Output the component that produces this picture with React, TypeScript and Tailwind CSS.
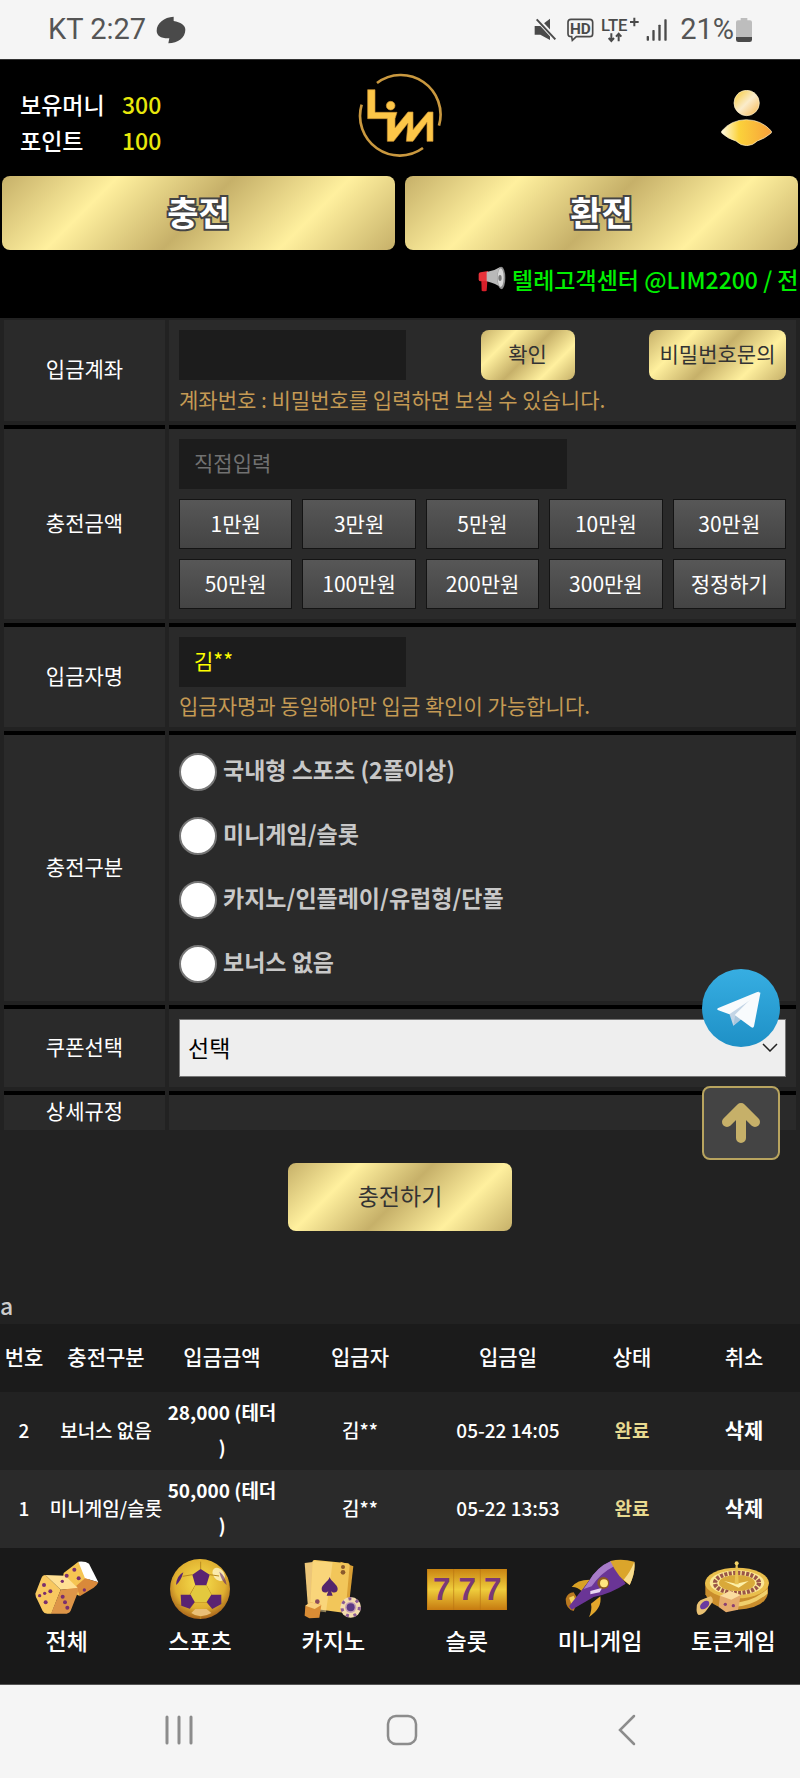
import React from 'react'

const GOLD = 'bg-[linear-gradient(135deg,#c6b069_0%,#fff09e_25%,#c6b069_50%,#fff09e_75%,#c6b069_100%)]'

const amounts = ['1만원', '3만원', '5만원', '10만원', '30만원', '50만원', '100만원', '200만원', '300만원', '정정하기']
const types = ['국내형 스포츠 (2폴이상)', '미니게임/슬롯', '카지노/인플레이/유럽형/단폴', '보너스 없음']
const history = [
  { no: 2, type: '보너스 없음', amount: '28,000 (테더', name: '김**', date: '05-22 14:05' },
  { no: 1, type: '미니게임/슬롯', amount: '50,000 (테더', name: '김**', date: '05-22 13:53' },
]

const StatusBar = () => (
  <div className="flex h-15 items-center justify-between border-b border-[#333] bg-[#f5f5f5] px-12 font-[Roboto,sans-serif] text-[29px] text-[#555]">
    <div className="flex items-center gap-[10px]">
      <span>KT 2:27</span>
      <svg width="30" height="28" viewBox="0 0 90 84" fill="#4a4a4a">
        <path d="M53 2v13c20 4 35 12 35 26 0 24-22 40-51 41l3-15C14 68 2 58 2 44 2 22 24 3 53 2z" />
      </svg>
    </div>
    <div className="flex items-center">
      <svg width="138" height="40" viewBox="0 -24 414 120" className="mr-2 overflow-visible">
        <g fill="#4a4a4a">
          <path d="M2 24h17l29-22v64L19 50H2z" />
          <path d="M8 2l58 62" stroke="#f5f5f5" strokeWidth="14" />
          <path d="M8 4l56 60" stroke="#4a4a4a" strokeWidth="6" />
          <path d="M111 4h56q9 0 9 9v34q0 9-9 9h-40l-12 11-2-11q-11 0-11-9V13q0-9 9-9z" fill="none" stroke="#4a4a4a" strokeWidth="5" />
          <text x="139" y="47" textAnchor="middle" fontFamily="Roboto" fontSize="46" fontWeight="700">HD</text>
          <text x="201" y="38" fontFamily="Roboto" fontSize="50" fontWeight="500">LTE</text>
          <path d="M288 12h26M301 -1v26" stroke="#4a4a4a" strokeWidth="6" />
          <path d="M232 46v22m-8-8l8 9 8-9M254 70V48m-8 8l8-9 8 9" fill="none" stroke="#4a4a4a" strokeWidth="6" />
          <rect x="338" y="54" width="7" height="14" rx="2" />
          <rect x="355" y="36" width="7" height="32" rx="2" />
          <rect x="373" y="20" width="7" height="48" rx="2" />
          <rect x="391" y="4" width="7" height="64" rx="2" />
        </g>
      </svg>
      <span>21%</span>
      <svg width="16" height="24" viewBox="0 0 48 72" className="ml-0.5">
        <path d="M14 0h20v7h8q6 0 6 6v46H0V13q0-6 6-6h8z" fill="#bdbdbd" />
        <path d="M0 57h48v8q0 7-7 7H7q-7 0-7-7z" fill="#4a4a4a" />
      </svg>
    </div>
  </div>
)

const Logo = () => (
  <svg width="84" height="84" viewBox="25 20 252 252" fill="none" aria-label="LIM">
    <path d="M82 50A119 119 0 0 1 268 178M220 245A119 119 0 0 1 36 115" stroke="#c9983f" strokeWidth="8" />
    <g fill="#fdc648" stroke="#c98f34" strokeWidth="2">
      <path d="M54 70h22v68h66l-6 19v28l39-48h15v53l45-53h15v88h-18v-57l-42 57h-20l5-55-43 55h-19v-68H54z" />
      <circle cx="123" cy="118" r="13" />
    </g>
  </svg>
)

const UserIcon = () => (
  <svg width="51" height="56" viewBox="0 0 153 168">
    <defs>
      <linearGradient id="head" x1="0" y1="0" x2="1" y2="1">
        <stop offset="0" stopColor="#f6c933" />
        <stop offset=".5" stopColor="#fbeccb" />
        <stop offset="1" stopColor="#f5b64c" />
      </linearGradient>
      <linearGradient id="body" x1="0" y1="0" x2="1" y2="0">
        <stop offset="0" stopColor="#fffae0" />
        <stop offset=".35" stopColor="#fbd23b" />
        <stop offset="1" stopColor="#f7a13a" />
      </linearGradient>
    </defs>
    <circle cx="77" cy="39" r="38" fill="url(#head)" stroke="#fff3d0" strokeWidth="2" />
    <path d="M2 123Q30 90 76 89q46 1 75 34v6q-22 18-42 24-14 14-32 14t-32-14Q22 147 2 129z" fill="url(#body)" stroke="#fff3d0" strokeWidth="2" />
  </svg>
)

const Megaphone = () => (
  <svg width="28" height="26" viewBox="0 0 84 78">
    <path d="M10 44h18l-2 30q-8 3-15 0z" fill="#d81f2a" />
    <path d="M2 24q0-4 6-5l22-4v30L8 46q-5 0-6-5z" fill="#e8323a" />
    <path d="M26 18Q50 14 68 2l6 66Q52 52 26 46z" fill="#b9b9b9" />
    <ellipse cx="70" cy="36" rx="12" ry="34" fill="#8e8e8e" />
    <ellipse cx="68" cy="35" rx="9" ry="28" fill="#d9d9d9" />
    <ellipse cx="66" cy="36" rx="5" ry="9" fill="#777" />
  </svg>
)

const DiceIcon = () => (
  <svg width="64" height="60" viewBox="0 0 192 180">
    <path d="M86 42l44-34 32 50-12 38-18 14-52-30z" fill="#f6c552" />
    <path d="M130 8q22-2 32 6l28 56-40-12z" fill="#fff" />
    <path d="M150 58l40 12q-4 10-14 16l-42 26-10-32z" fill="#d9893a" />
    <path d="M31 48l60 2 38 38-52 4z" fill="#ffe093" />
    <path d="M31 48q-8 0-12 10L1 104q0 8 6 18l16 34q4 8 14 8h12l28-72z" fill="#f8c860" />
    <path d="M77 92l52-6q2 8-2 18l-18 46q-3 12-14 14H48z" fill="#dd9548" />
    <g fill="#7a2f6e">
      <circle cx="118" cy="32" r="6" /><circle cx="95" cy="50" r="6" /><circle cx="131" cy="58" r="6" /><circle cx="148" cy="93" r="5" />
      <circle cx="27" cy="78" r="6" /><circle cx="14" cy="110" r="5" /><circle cx="29" cy="103" r="5" /><circle cx="46" cy="97" r="6" /><circle cx="32" cy="130" r="6" />
      <circle cx="83" cy="113" r="6" /><circle cx="90" cy="130" r="6" /><circle cx="97" cy="146" r="6" /><circle cx="82" cy="67" r="5" />
    </g>
  </svg>
)

const BallIcon = () => (
  <svg width="60" height="60" viewBox="0 0 180 180">
    <defs>
      <radialGradient id="ball" cx=".5" cy=".4" r=".6">
        <stop offset="0" stopColor="#f7e04e" />
        <stop offset=".7" stopColor="#e0b030" />
        <stop offset="1" stopColor="#a8641c" />
      </radialGradient>
    </defs>
    <circle cx="90" cy="90" r="90" fill="url(#ball)" />
    <ellipse cx="146" cy="46" rx="16" ry="22" fill="#fff6c8" opacity=".8" transform="rotate(-40 146 46)" />
    <path d="M76 79L60 107M109 79l15 28M74 129l-15 20M110 129l17 20M74 129h36M67 47L38 52M119 47l28 4M92 30V8M34 140l-14-4M154 135l10 0M92 180v-8" stroke="#b98a1e" strokeWidth="3" />
    <path d="M76 79h33l15 28-14 22H74l-12-22z" fill="#e3c93e" />
    <path d="M76 150h34l14 12q-34 20-60 0z" fill="#e9bf77" />
    <g fill="#5a2372">
      <path d="M92 30l27 17-10 32H76L67 47z" />
      <path d="M32 107h30l12 22-15 20-25-9z" />
      <path d="M124 107h30v28l-27 15-17-21z" />
      <path d="M40 40Q20 50 18 78q14-10 22-38z" />
      <path d="M148 38q18 12 22 40-16-12-22-40z" opacity=".6" />
    </g>
  </svg>
)

const CardIcon = () => (
  <svg width="58" height="60" viewBox="0 0 174 180">
    <path d="M2 12l30-4 6 146-26-6z" fill="#ecc679" />
    <path d="M110 8l38 14-16 140-40-20z" fill="#d99f34" />
    <path d="M26 6q2-4 8-3l98 10q6 1 5 7l-13 142-106-14z" fill="#f2c65a" />
    <path d="M26 6l60 4-20 150-48-6z" fill="#ffe39a" opacity=".5" />
    <path d="M77 54c4 14 24 22 24 36 0 12-14 14-20 6l5 14H68l5-14c-6 8-20 6-20-6 0-14 20-22 24-36z" fill="#54256c" />
    <circle cx="117" cy="24" r="6" fill="#8a5a2c" /><circle cx="117" cy="40" r="7" fill="#8a5a2c" />
    <circle cx="40" cy="128" r="7" fill="#8a4a5c" />
    <path d="M4 140l16-10 32 8-6 38-30 2-14-8z" fill="#d98c35" />
    <path d="M4 140l16-10 32 8-20 12z" fill="#f9cf7c" />
    <circle cx="140" cy="145" r="31" fill="#f3dcae" />
    <circle cx="140" cy="145" r="26" fill="none" stroke="#8a5a94" strokeWidth="9" strokeDasharray="9 14" />
    <circle cx="140" cy="145" r="17" fill="#c6a0b4" />
    <circle cx="140" cy="145" r="12" fill="#5c3a84" />
  </svg>
)

const SlotIcon = () => (
  <svg width="80" height="41" viewBox="0 0 240 123">
    <defs>
      <linearGradient id="slot" x1="0" y1="0" x2="0" y2="1">
        <stop offset="0" stopColor="#c98412" />
        <stop offset=".5" stopColor="#efcd3c" />
        <stop offset="1" stopColor="#c67a10" />
      </linearGradient>
    </defs>
    <rect width="240" height="123" fill="url(#slot)" />
    <path d="M80 0v123M160 0v123M1 0v123M239 0v123" stroke="#b87414" strokeWidth="3" opacity=".6" />
    <g fill="#7a3878" fontFamily="Liberation Sans" fontWeight="700" fontSize="94" textAnchor="middle">
      <text x="44" y="94">7</text>
      <text x="121" y="94">7</text>
      <text x="197" y="94">7</text>
    </g>
  </svg>
)

const RocketIcon = () => (
  <svg width="70" height="60" viewBox="0 0 210 180">
    <path d="M20 84q16-22 54-22L50 96Q34 82 20 84z" fill="#d9a125" />
    <path d="M78 134l28-22q6 36-34 62 10-22 6-40z" fill="#e2a72c" />
    <path d="M2 120q6-20 24-20l14 22-14 34Q2 150 2 120z" fill="#b9781f" />
    <path d="M12 116l14-6 8 20-10 18z" fill="#f4d25c" />
    <path d="M138 6Q96 24 72 66L12 142l8 10 66-38q52-10 96-40z" fill="#6a3596" />
    <path d="M138 6Q96 24 72 66l-16 24 24-8q26-40 70-62z" fill="#a77bc8" />
    <path d="M76 96l36-10-8 14-28 6z" fill="#e9d7f2" />
    <path d="M136 6q34-8 72 2 4 32-14 70-34-20-58-72z" fill="#dba52b" />
    <path d="M208 8q4 32-14 70l-18-16q22-26 32-54z" fill="#f7dc8e" />
    <circle cx="115" cy="72" r="18" fill="#8d5a20" />
    <circle cx="117" cy="73" r="12" fill="#ffe680" />
  </svg>
)

const RouletteIcon = () => (
  <svg width="74" height="56" viewBox="0 0 222 168">
    <path d="M28 66v34q20 46 96 46 84-4 92-50V66z" fill="#c98d2c" />
    <path d="M90 138q70 6 124-40v-14q-50 46-124 42z" fill="#f0cf6c" />
    <ellipse cx="123" cy="66" rx="96" ry="46" fill="#e9be4c" />
    <ellipse cx="123" cy="65" rx="82" ry="37" fill="#fbe897" />
    <ellipse cx="123" cy="66" rx="66" ry="30" fill="none" stroke="#9a5548" strokeWidth="13" strokeDasharray="9 4" />
    <ellipse cx="123" cy="66" rx="54" ry="24" fill="#d9a93a" />
    <path d="M84 60l36 8 38-8-30 20z" fill="#fdf0a8" />
    <path d="M119 8h6l3 62h-12z" fill="#e8c252" />
    <circle cx="122" cy="7" r="6" fill="#f2d46a" />
    <path d="M72 104l30-14 32 12-8 44-36 8-22-16z" fill="#e5ab6c" />
    <path d="M72 104l30-14 32 12-28 14z" fill="#fbdca0" />
    <circle cx="88" cy="130" r="5" fill="#8a3f72" /><circle cx="112" cy="134" r="5" fill="#8a3f72" />
    <path d="M2 140q0-20 20-26l22-8q8 6 6 16L30 150q-10 12-22 12-8-6-6-22z" fill="#e9c173" />
    <ellipse cx="26" cy="132" rx="16" ry="10" fill="#6a3aa0" transform="rotate(-40 26 132)" />
  </svg>
)

const menus = [
  { name: '전체', icon: <DiceIcon /> },
  { name: '스포츠', icon: <BallIcon /> },
  { name: '카지노', icon: <CardIcon /> },
  { name: '슬롯', icon: <SlotIcon /> },
  { name: '미니게임', icon: <RocketIcon /> },
  { name: '토큰게임', icon: <RouletteIcon /> },
]

const Row = ({ label, htmlFor, first, className, children }: { label: string; htmlFor?: string; first?: boolean; className?: string; children?: React.ReactNode }) => {
  const line = first ? '' : 'border-t-4 border-black'
  return (
    <div className="grid grid-cols-[161px_1fr] gap-1">
      <div className={`flex items-center justify-center bg-[#2a2a2a] pb-1 text-white ${line}`}>
        {htmlFor ? <label htmlFor={htmlFor}>{label}</label> : <span>{label}</span>}
      </div>
      <div className={`bg-[#2a2a2a] px-[10px] ${line} ${className ?? 'py-[10px]'}`}>{children}</div>
    </div>
  )
}

const App = () => {
  return (
    <main className="min-h-screen bg-[#222] font-['Noto_Sans_CJK_KR',sans-serif] text-[21px] leading-[31px]">
      <StatusBar />

      <header className="bg-black">
        <div className="grid h-29 grid-cols-3 items-center px-5">
          <dl className="grid grid-cols-[102px_1fr] pt-2 text-[23px] leading-9 font-medium">
            <dt className="text-white">보유머니</dt>
            <dd className="text-[#e8e80c]">300</dd>
            <dt className="text-white">포인트</dt>
            <dd className="text-[#e8e80c]">100</dd>
          </dl>
          <a href="#" className="justify-self-center pb-1.5"><Logo /></a>
          <a href="#" className="justify-self-end pr-2" aria-label="내 정보"><UserIcon /></a>
        </div>
        <div className="grid grid-cols-2 gap-[10px] px-0.5">
          {['충전', '환전'].map((t) => (
            <button key={t} type="button" className={`h-[74px] rounded-lg pb-1 text-[34px] font-bold text-white [paint-order:stroke_fill] [-webkit-text-stroke:4px_#444] ${GOLD}`}>
              {t}
            </button>
          ))}
        </div>
        <div className="flex h-[68px] items-center gap-1.5 overflow-hidden pb-[10px] pl-[478px] text-[23px] font-medium whitespace-nowrap text-[#00f000]">
          <span className="shrink-0"><Megaphone /></span>
          <span>텔레고객센터 @LIM2200 / 전</span>
        </div>
      </header>

      <form className="pb-[93px]" onSubmit={(e) => e.preventDefault()}>
        <div className="relative flex flex-col gap-1 px-1 pt-0.5">
          <Row label="입금계좌" htmlFor="account" first>
            <div className="flex items-center justify-between">
              <input id="account" type="password" className="h-[50px] w-[227px] bg-[#1c1c1c] px-[15px] text-white outline-none" />
              <button type="button" className={`h-[50px] w-[94px] rounded-lg pb-1 text-[#333] ${GOLD}`}>확인</button>
              <button type="button" className={`h-[50px] w-[137px] rounded-lg pb-1 text-[#333] ${GOLD}`}>비밀번호문의</button>
            </div>
            <p className="pt-2 leading-[23px] text-[#c49a54]">계좌번호 : 비밀번호를 입력하면 보실 수 있습니다.</p>
          </Row>

          <Row label="충전금액" htmlFor="amount">
            <input id="amount" placeholder="직접입력" className="block h-[50px] w-[388px] bg-[#1c1c1c] px-[15px] pb-1 text-white outline-none placeholder:text-[#717171]" />
            <div className="mt-[10px] grid grid-cols-5 gap-[10px]">
              {amounts.map((a) => (
                <button key={a} type="button" className="h-[50px] border border-[#141414] bg-linear-to-b from-[#575757] to-[#444] pb-0.5 text-white">
                  {a}
                </button>
              ))}
            </div>
          </Row>

          <Row label="입금자명" htmlFor="owner">
            <input id="owner" defaultValue="김**" className="block h-[50px] w-[227px] bg-[#1c1c1c] px-[15px] pb-1 text-[#ff0] outline-none" />
            <p className="pt-[7px] leading-[23px] text-[#c49a54]">입금자명과 동일해야만 입금 확인이 가능합니다.</p>
          </Row>

          <Row label="충전구분" className="py-[5px]">
            {types.map((t) => (
              <label key={t} className="flex h-16 items-center gap-1.5 text-[23px] font-bold text-[#c8c8c8]">
                <input type="radio" name="type" className="size-[38px] appearance-none rounded-full border-2 border-[#767676] bg-white checked:border-8" />
                <span className="pb-1.5">{t}</span>
              </label>
            ))}
          </Row>

          <Row label="쿠폰선택" htmlFor="coupon">
            <div className="relative">
              <select id="coupon" className="block h-[58px] w-full appearance-none border border-[#767676] bg-[#eee] px-2 pb-0.5 text-[23px] text-black">
                <option>선택</option>
              </select>
              <svg width="16" height="9" viewBox="0 0 16 9" className="pointer-events-none absolute top-6 right-2" fill="none" stroke="#222">
                <path d="M1 1l7 7 7-7" strokeWidth="1.500" />
              </svg>
            </div>
          </Row>

          <Row label="상세규정" className="min-h-[39px]" />

          <div className="absolute right-5 -bottom-[30px] flex flex-col gap-[39px]">
            <a href="#" aria-label="텔레그램">
              <svg width="78" height="78" viewBox="0 0 234 234">
                <defs>
                  <linearGradient id="tg" x1="0" y1="0" x2="0" y2="1">
                    <stop offset="0" stopColor="#37aee2" />
                    <stop offset="1" stopColor="#1e90c6" />
                  </linearGradient>
                </defs>
                <circle cx="117" cy="117" r="117" fill="url(#tg)" />
                <path d="M80 128l14 42 26-22 44-66z" fill="#c3d5e6" />
                <path d="M94 170l6-32 60-62-44 76z" fill="#a9c6dd" />
                <path d="M98 138l62-62 14-6q2 2 0 8l-18 94q-2 7-8 3z" fill="#f8fbfd" />
                <path d="M47 118q-4 4 2 6l33 12 82-56 8-11q-3-2-8 1z" fill="#f8fbfd" />
              </svg>
            </a>
            <a href="#" aria-label="맨 위로" className="flex h-[74px] w-[78px] items-center justify-center rounded-lg border-2 border-[#b8a45f] bg-[#444]">
              <svg width="40" height="42" viewBox="0 0 40 42" fill="none" stroke="#c6b069" strokeWidth="10" strokeLinecap="round" strokeLinejoin="round">
                <path d="M20 36V7M6 20L20 6l14 14" />
              </svg>
            </a>
          </div>
        </div>

        <div className="flex justify-center pt-[33px]">
          <button type="submit" className={`h-[68px] w-[224px] rounded-lg pb-1 text-[23px] text-[#333] ${GOLD}`}>충전하기</button>
        </div>
      </form>

      <section>
        <p className="-mt-[34px] h-[34px] text-[23px] font-medium text-[#ccc]">a</p>
        <table className="w-full table-fixed text-center text-[19px] leading-[35px] font-medium text-white">
          <thead className="bg-[#1b1b1b]">
            <tr className="h-[68px] text-[21px]">
              <th className="w-[6%] pb-1 font-medium">번호</th>
              <th className="w-[14.500%] pb-1 font-medium">충전구분</th>
              <th className="w-[14.500%] pb-1 font-medium">입금금액</th>
              <th className="w-[20%] pb-1 font-medium">입금자</th>
              <th className="w-[17%] pb-1 font-medium">입금일</th>
              <th className="w-[14%] pb-1 font-medium">상태</th>
              <th className="w-[14%] pb-1 font-medium">취소</th>
            </tr>
          </thead>
          <tbody>
            {history.map((h) => (
              <tr key={h.no} className="h-[78px] even:bg-[#2a2a2a] *:pb-1">
                <td>{h.no}</td>
                <td className="whitespace-nowrap">{h.type}</td>
                <td className="font-bold whitespace-nowrap">{h.amount}<br />)</td>
                <td>{h.name}</td>
                <td>{h.date}</td>
                <td className="font-bold text-[#e8da90]">완료</td>
                <td><button type="button" className="text-[21px] font-bold">삭제</button></td>
              </tr>
            ))}
          </tbody>
        </table>
      </section>

      <nav className="grid h-[137px] grid-cols-6 border-b border-[#555] bg-[#191919] pt-[7px] text-[23px] font-medium text-white">
        {menus.map((m) => (
          <a key={m.name} href="#" className="flex flex-col items-center gap-0.5">
            <span className="flex h-17 items-center">{m.icon}</span>
            {m.name}
          </a>
        ))}
      </nav>

      <div className="flex h-[93px] items-center justify-between bg-[#f5f5f5] pr-41 pb-1 pl-40">
        <button type="button" aria-label="최근 앱" className="px-1">
          <svg width="30" height="30" viewBox="0 0 30 30" stroke="#8c8c8c" strokeWidth="3" strokeLinecap="round"><path d="M3 2v26M15 2v26M27 2v26" /></svg>
        </button>
        <button type="button" aria-label="홈">
          <svg width="32" height="32" viewBox="0 0 32 32" fill="none" stroke="#8c8c8c" strokeWidth="2.500"><rect x="2" y="2" width="28" height="28" rx="8" /></svg>
        </button>
        <button type="button" aria-label="뒤로" className="pl-3">
          <svg width="18" height="32" viewBox="0 0 18 32" fill="none" stroke="#8c8c8c" strokeWidth="2.500" strokeLinecap="round"><path d="M16 2L2 16l14 14" /></svg>
        </button>
      </div>
    </main>
  )
}

export default App
